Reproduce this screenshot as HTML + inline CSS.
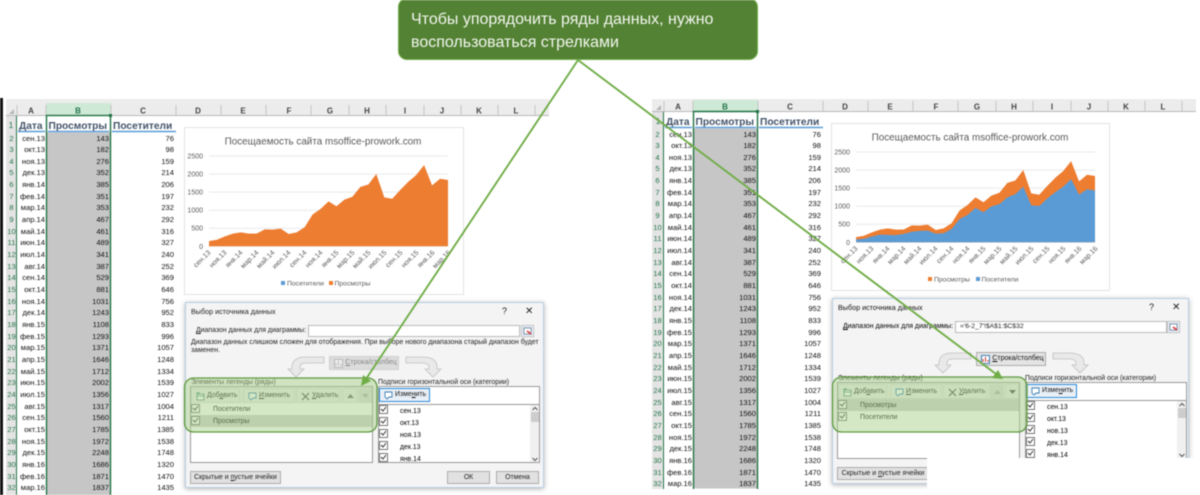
<!DOCTYPE html>
<html lang="ru"><head><meta charset="utf-8"><title>Excel</title>
<style>
html,body{margin:0;padding:0;background:#fff;width:1200px;height:495px;overflow:hidden}
body{font-family:"Liberation Sans","Noto Sans CJK SC",sans-serif;position:relative}
#all{position:absolute;left:0;top:0;width:1200px;height:495px;filter:blur(.45px);overflow:hidden}
.abs,svg.pg{position:absolute}
svg.pg{left:0;top:0}
.col{position:absolute;font-size:7.6px;line-height:11.65px;color:#111;text-align:right;white-space:nowrap}
.num{text-align:center;color:#217346;width:11px}
.dlg{position:absolute;width:359px;height:186px;background:#f4f4f4;border:1px solid #b9cfe4;box-sizing:border-box;box-shadow:0 1px 5px rgba(0,0,0,.3);font-size:6.9px;color:#222}
.dlg>*{position:absolute;white-space:nowrap}
.t{line-height:8px}
.box{background:#fff;border:1px solid #999;box-sizing:border-box}
.btn{background:#e1e1e1;border:1px solid #adadad;box-sizing:border-box;text-align:center;line-height:11px;color:#222}
.tb{background:#ececec;border:1px solid #dcdcdc;box-sizing:border-box;line-height:13px;text-align:left;padding-left:15px;color:#111}
.ic{position:absolute;left:4px;top:3px}
.c{fill:#fff;stroke:#555;stroke-width:.8}
.sc{background:#f0f0f0}
.d{color:#000}
</style></head><body>
<div id="all">
<div class="abs" style="left:0;top:98px;width:3px;height:397px;background:#111"></div>

<svg class="pg" width="1200" height="495" viewBox="0 0 1200 495" font-family="Liberation Sans, sans-serif">
<!-- left sheet -->
<rect x="6" y="99" width="543" height="16" fill="#ececec"/>
<rect x="6" y="115" width="543" height="1" fill="#b8b8b8"/>
<rect x="46" y="103" width="65" height="12" fill="#cfe9d7"/>
<rect x="6" y="116" width="10" height="379" fill="#e4e4e4"/>
<rect x="16" y="116" width="1" height="379" fill="#217346"/>
<path d="M9 114h5v-5z" fill="#b5b5b5"/>
<path d="M17 105v10M46 105v10M111 105v10M176 105v10M221 105v10M266 105v10M311 105v10M349 105v10M386 105v10M424 105v10M461 105v10M498 105v10M535 105v10" stroke="#c4c4c4" fill="none"/>
<g font-size="8" text-anchor="middle" fill="#444" font-weight="bold">
<text x="31" y="113.500">A</text><text x="78" y="113.500" fill="#217346">B</text><text x="143" y="113.500">C</text><text x="198" y="113.500">D</text><text x="243" y="113.500">E</text><text x="289" y="113.500">F</text><text x="330" y="113.500">G</text><text x="367" y="113.500">H</text><text x="405" y="113.500">I</text><text x="442" y="113.500">J</text><text x="479" y="113.500">K</text><text x="516" y="113.500">L</text>
</g>
<text x="11" y="128" font-size="8" text-anchor="middle" fill="#217346">1</text>
<g font-size="10.200" font-weight="bold" fill="#44546a"><text x="19" y="129">Дата</text><text x="48.500" y="129">Просмотры</text><text x="113" y="129">Посетители</text></g>
<path d="M18 131.500h27M48 131.500h61M112 131.500h64" stroke="#5b9bd5" stroke-width="1.500"/>
<rect x="47" y="132.500" width="63" height="363" fill="#c6c6c6"/>
<rect x="46.500" y="115.500" width="64" height="390" fill="none" stroke="#217346" stroke-width="1.400"/>
<rect x="109" y="114" width="3" height="3" fill="#217346"/>

<!-- right sheet -->
<rect x="652" y="99" width="544" height="12" fill="#ececec"/>
<rect x="652" y="111" width="544" height="1" fill="#b8b8b8"/>
<rect x="693" y="100" width="65" height="11" fill="#cfe9d7"/>
<rect x="652" y="112" width="11" height="377" fill="#e4e4e4"/>
<rect x="663" y="112" width="1" height="377" fill="#217346"/>
<path d="M656 110h5v-5z" fill="#b5b5b5"/>
<path d="M664 101v10M693 101v10M758 101v10M823 101v10M868 101v10M913 101v10M958 101v10M996 101v10M1033 101v10M1071 101v10M1108 101v10M1145 101v10M1182 101v10" stroke="#c4c4c4" fill="none"/>
<g font-size="8" text-anchor="middle" fill="#444" font-weight="bold">
<text x="678" y="109.500">A</text><text x="725" y="109.500" fill="#217346">B</text><text x="790" y="109.500">C</text><text x="845" y="109.500">D</text><text x="890" y="109.500">E</text><text x="936" y="109.500">F</text><text x="977" y="109.500">G</text><text x="1014" y="109.500">H</text><text x="1052" y="109.500">I</text><text x="1089" y="109.500">J</text><text x="1126" y="109.500">K</text><text x="1163" y="109.500">L</text>
</g>
<text x="658" y="124" font-size="8" text-anchor="middle" fill="#217346">1</text>
<g font-size="10.200" font-weight="bold" fill="#44546a"><text x="666" y="125">Дата</text><text x="695.500" y="125">Просмотры</text><text x="760" y="125">Посетители</text></g>
<path d="M665 127.500h27M695 127.500h61M759 127.500h64" stroke="#5b9bd5" stroke-width="1.500"/>
<rect x="694" y="128.500" width="63" height="360" fill="#c6c6c6"/>
<path d="M693.500 489V111.500H757.500V489" fill="none" stroke="#217346" stroke-width="1.400"/>
<rect x="756" y="110" width="3" height="3" fill="#217346"/>

<!-- left chart -->
<rect x="184.500" y="127.500" width="279" height="167" fill="#fff" stroke="#e2e2e2"/>
<text x="323" y="144.500" font-size="9.900" text-anchor="middle" fill="#595959">Посещаемость сайта msoffice-prowork.com</text>
<path d="M209 156h239M209 174.100h239M209 192.100h239M209 210.200h239M209 228.200h239M209 246.300h239" stroke="#e9e9e9" stroke-width="1"/>
<g font-size="7" fill="#595959" text-anchor="end"><text x="203" y="158.500">2500</text><text x="203" y="176.500">2000</text><text x="203" y="194.500">1500</text><text x="203" y="212.500">1000</text><text x="203" y="230.500">500</text><text x="203" y="248.800">0</text></g>
<g transform="translate(209,246.300) scale(7.967,-0.03612)"><path fill="#ed7d31" d="M0 0L0 143 1 182 2 276 3 352 4 385 5 351 6 353 7 467 8 461 9 489 10 341 11 387 12 529 13 881 14 1031 15 1243 16 1108 17 1293 18 1371 19 1646 20 1712 21 2002 22 1356 23 1317 24 1560 25 1785 26 1972 27 2248 28 1686 29 1871 30 1837 30 0Z"/></g>
<g font-size="7" fill="#595959" text-anchor="end">
<text transform="translate(211,253) rotate(-45)">сен.13</text><text transform="translate(227,253) rotate(-45)">ноя.13</text><text transform="translate(243,253) rotate(-45)">янв.14</text><text transform="translate(259,253) rotate(-45)">мар.14</text><text transform="translate(275,253) rotate(-45)">май.14</text><text transform="translate(291,253) rotate(-45)">июл.14</text><text transform="translate(307,253) rotate(-45)">сен.14</text><text transform="translate(323,253) rotate(-45)">ноя.14</text><text transform="translate(339,253) rotate(-45)">янв.15</text><text transform="translate(355,253) rotate(-45)">мар.15</text><text transform="translate(371,253) rotate(-45)">май.15</text><text transform="translate(387,253) rotate(-45)">июл.15</text><text transform="translate(403,253) rotate(-45)">сен.15</text><text transform="translate(419,253) rotate(-45)">ноя.15</text><text transform="translate(435,253) rotate(-45)">янв.16</text><text transform="translate(451,253) rotate(-45)">мар.16</text>
</g>
<rect x="281" y="281" width="4" height="4" fill="#5b9bd5"/><text x="287" y="285.500" font-size="6.800" fill="#595959">Посетители</text>
<rect x="329" y="281" width="4" height="4" fill="#ed7d31"/><text x="334.500" y="285.500" font-size="6.800" fill="#595959">Просмотры</text>

<!-- right chart -->
<rect x="831.500" y="123.500" width="278" height="167" fill="#fff" stroke="#e2e2e2"/>
<text x="970" y="140.500" font-size="9.900" text-anchor="middle" fill="#595959">Посещаемость сайта msoffice-prowork.com</text>
<path d="M856 152h239M856 170.100h239M856 188.100h239M856 206.200h239M856 224.200h239M856 242.300h239" stroke="#e9e9e9" stroke-width="1"/>
<g font-size="7" fill="#595959" text-anchor="end"><text x="850" y="154.500">2500</text><text x="850" y="172.500">2000</text><text x="850" y="190.500">1500</text><text x="850" y="208.500">1000</text><text x="850" y="226.500">500</text><text x="850" y="244.800">0</text></g>
<g transform="translate(856,242.300) scale(7.967,-0.03612)"><path fill="#ed7d31" d="M0 0L0 143 1 182 2 276 3 352 4 385 5 351 6 353 7 467 8 461 9 489 10 341 11 387 12 529 13 881 14 1031 15 1243 16 1108 17 1293 18 1371 19 1646 20 1712 21 2002 22 1356 23 1317 24 1560 25 1785 26 1972 27 2248 28 1686 29 1871 30 1837 30 0Z"/><path fill="#5b9bd5" d="M0 0L0 76 1 98 2 159 3 214 4 206 5 197 6 232 7 292 8 316 9 327 10 240 11 252 12 369 13 646 14 756 15 952 16 833 17 996 18 1057 19 1248 20 1334 21 1539 22 1027 23 1004 24 1211 25 1385 26 1538 27 1748 28 1320 29 1470 30 1435 30 0Z"/></g>
<g font-size="7" fill="#595959" text-anchor="end">
<text transform="translate(858,249) rotate(-45)">сен.13</text><text transform="translate(874,249) rotate(-45)">ноя.13</text><text transform="translate(890,249) rotate(-45)">янв.14</text><text transform="translate(906,249) rotate(-45)">мар.14</text><text transform="translate(922,249) rotate(-45)">май.14</text><text transform="translate(938,249) rotate(-45)">июл.14</text><text transform="translate(954,249) rotate(-45)">сен.14</text><text transform="translate(970,249) rotate(-45)">ноя.14</text><text transform="translate(986,249) rotate(-45)">янв.15</text><text transform="translate(1002,249) rotate(-45)">мар.15</text><text transform="translate(1018,249) rotate(-45)">май.15</text><text transform="translate(1034,249) rotate(-45)">июл.15</text><text transform="translate(1050,249) rotate(-45)">сен.15</text><text transform="translate(1066,249) rotate(-45)">ноя.15</text><text transform="translate(1082,249) rotate(-45)">янв.16</text><text transform="translate(1098,249) rotate(-45)">мар.16</text>
</g>
<rect x="928" y="277" width="4" height="4" fill="#ed7d31"/><text x="934" y="281.500" font-size="6.800" fill="#595959">Просмотры</text>
<rect x="976" y="277" width="4" height="4" fill="#5b9bd5"/><text x="981.500" y="281.500" font-size="6.800" fill="#595959">Посетители</text>
</svg>

<!-- left columns -->
<div class="col num" style="left:6px;top:132.500px">2<br>3<br>4<br>5<br>6<br>7<br>8<br>9<br>10<br>11<br>12<br>13<br>14<br>15<br>16<br>17<br>18<br>19<br>20<br>21<br>22<br>23<br>24<br>25<br>26<br>27<br>28<br>29<br>30<br>31<br>32</div>
<div class="col" style="right:1155px;top:132.500px">сен.13<br>окт.13<br>ноя.13<br>дек.13<br>янв.14<br>фев.14<br>мар.14<br>апр.14<br>май.14<br>июн.14<br>июл.14<br>авг.14<br>сен.14<br>окт.14<br>ноя.14<br>дек.14<br>янв.15<br>фев.15<br>мар.15<br>апр.15<br>май.15<br>июн.15<br>июл.15<br>авг.15<br>сен.15<br>окт.15<br>ноя.15<br>дек.15<br>янв.16<br>фев.16<br>мар.16</div>
<div class="col" style="right:1091px;top:132.500px">143<br>182<br>276<br>352<br>385<br>351<br>353<br>467<br>461<br>489<br>341<br>387<br>529<br>881<br>1031<br>1243<br>1108<br>1293<br>1371<br>1646<br>1712<br>2002<br>1356<br>1317<br>1560<br>1785<br>1972<br>2248<br>1686<br>1871<br>1837</div>
<div class="col" style="right:1026px;top:132.500px">76<br>98<br>159<br>214<br>206<br>197<br>232<br>292<br>316<br>327<br>240<br>252<br>369<br>646<br>756<br>952<br>833<br>996<br>1057<br>1248<br>1334<br>1539<br>1027<br>1004<br>1211<br>1385<br>1538<br>1748<br>1320<br>1470<br>1435</div>

<!-- right columns -->
<div class="col num" style="left:652px;top:128.500px">2<br>3<br>4<br>5<br>6<br>7<br>8<br>9<br>10<br>11<br>12<br>13<br>14<br>15<br>16<br>17<br>18<br>19<br>20<br>21<br>22<br>23<br>24<br>25<br>26<br>27<br>28<br>29<br>30<br>31<br>32</div>
<div class="col" style="right:508px;top:128.500px">сен.13<br>окт.13<br>ноя.13<br>дек.13<br>янв.14<br>фев.14<br>мар.14<br>апр.14<br>май.14<br>июн.14<br>июл.14<br>авг.14<br>сен.14<br>окт.14<br>ноя.14<br>дек.14<br>янв.15<br>фев.15<br>мар.15<br>апр.15<br>май.15<br>июн.15<br>июл.15<br>авг.15<br>сен.15<br>окт.15<br>ноя.15<br>дек.15<br>янв.16<br>фев.16<br>мар.16</div>
<div class="col" style="right:444px;top:128.500px">143<br>182<br>276<br>352<br>385<br>351<br>353<br>467<br>461<br>489<br>341<br>387<br>529<br>881<br>1031<br>1243<br>1108<br>1293<br>1371<br>1646<br>1712<br>2002<br>1356<br>1317<br>1560<br>1785<br>1972<br>2248<br>1686<br>1871<br>1837</div>
<div class="col" style="right:379px;top:128.500px">76<br>98<br>159<br>214<br>206<br>197<br>232<br>292<br>316<br>327<br>240<br>252<br>369<br>646<br>756<br>952<br>833<br>996<br>1057<br>1248<br>1334<br>1539<br>1027<br>1004<br>1211<br>1385<br>1538<br>1748<br>1320<br>1470<br>1435</div>

<!-- left dialog -->
<div class="dlg" style="left:185px;top:302px">
<div class="t" style="left:5px;top:5px;font-size:7.200px">Выбор источника данных</div>
<div class="t" style="left:316px;top:4px;font-size:9px">?</div>
<div class="t" style="left:339px;top:5px;font-size:10px">✕</div>
<div class="t" style="left:10px;top:24px"><u>Д</u>иапазон данных для диаграммы:</div>
<div class="box" style="left:122px;top:22px;width:212px;height:12px;border-color:#bbb"></div>
<svg style="left:335px;top:22px" width="13" height="12"><rect width="13" height="12" fill="#dfe6ee" stroke="#aaa"/><rect x="3" y="3" width="7" height="6" fill="#fff" stroke="#6a7f98" stroke-width=".8"/><path d="M6 6l4 3" stroke="#d33" stroke-width="1.500"/></svg>
<div class="t" style="left:5px;top:36px;line-height:8px">Диапазон данных слишком сложен для отображения. При выборе нового диапазона старый диапазон будет<br>заменен.</div>
<svg style="left:0;top:0" width="359" height="186"><path d="M138 54H120Q106 54 106 64V66H102L110 74L118 66H114V64Q114 60 120 60H138Z" fill="#e9e9e9" stroke="#c0c0c0" stroke-width=".8"/><path d="M220 54H236Q251 54 251 64V66H255L247 74L239 66H243V64Q243 60 236 60H220Z" fill="#e9e9e9" stroke="#c0c0c0" stroke-width=".8"/></svg>
<div class="btn" style="left:143px;top:53px;width:70px;height:14px;line-height:12px;color:#888;background:#dcdcdc;border-color:#d0d0d0;padding-left:14px;font-size:7px"><svg class="ic" style="top:2px" width="9" height="9"><rect x=".5" y=".5" width="8" height="8" fill="#eee" stroke="#bbb"/><path d="M2 7V4M4.500 7V2M7 7V5" stroke="#bbb"/></svg><u>С</u>трока/столбец</div>
<div class="t" style="left:5px;top:76px" >Элементы легенды (ряды)</div>
<div class="t" style="left:192px;top:76px">Подписи горизонтальной оси (категории)</div>
<div class="box" style="left:4px;top:83px;width:183px;height:77px"></div>
<div class="abs" style="left:5px;top:84px;width:181px;height:16px;background:#ececec"></div>
<div class="tb" style="left:5px;top:85px;width:49px;height:15px"><svg class="ic" width="9" height="9"><path d="M1 2h7v6H1zM1 4h7M3 2V0M0 1h3" fill="#fff" stroke="#3f7f5f" stroke-width=".8"/></svg>Доб<u>а</u>вить</div>
<div class="tb" style="left:57px;top:85px;width:52px;height:15px"><svg class="ic" width="9" height="9"><path d="M1 1h7v5H5L3 8 1 6z" fill="#fff" stroke="#3c7fb5" stroke-width=".9"/></svg><u>И</u>зменить</div>
<div class="tb" style="left:110px;top:85px;width:44px;height:15px"><svg class="ic" width="9" height="9"><path d="M1 1l7 7M8 1L1 8" stroke="#444" stroke-width="1.100"/></svg><u>У</u>далить</div>
<div class="tb" style="left:156px;top:85px;width:15px;height:15px;padding:0"><svg class="ic" width="7" height="7"><path d="M0 6L3.500 2 7 6z" fill="#666"/></svg></div>
<div class="tb" style="left:172px;top:85px;width:14px;height:15px;padding:0;background:#dcdcdc"><svg class="ic" style="left:3px" width="7" height="7"><path d="M0 2L3.500 6 7 2z" fill="#aaa"/></svg></div>
<div class="abs" style="left:5px;top:112px;width:181px;height:12px;background:#cfcfcf"></div>
<svg style="left:5px;top:101px" width="10" height="22"><g class="c"><rect x=".5" y=".5" width="8" height="8"/><rect x=".5" y="12.500" width="8" height="8"/></g><path d="M2 4l2 2 3-4M2 16l2 2 3-4" fill="none" stroke="#333"/></svg>
<div class="t d" style="left:27px;top:103px">Посетители</div>
<div class="t d" style="left:27px;top:115px">Просмотры</div>
<div class="box" style="left:192px;top:83px;width:162px;height:77px"></div>
<div class="abs" style="left:193px;top:84px;width:160px;height:18px;background:#fff;border-bottom:1px solid #999;box-sizing:border-box"></div>
<div class="tb" style="left:193px;top:85px;width:51px;height:14px;border:1px solid #2b88d8;background:#e8eff6;line-height:12px"><svg class="ic" style="top:2px" width="9" height="9"><path d="M1 1h7v5H5L3 8 1 6z" fill="#fff" stroke="#3c7fb5" stroke-width=".9"/></svg>Изме<u>н</u>ить</div>
<svg style="left:193px;top:102px" width="10" height="58"><g class="c"><rect x=".5" y=".5" width="8" height="8"/><rect x=".5" y="12.500" width="8" height="8"/><rect x=".5" y="24.500" width="8" height="8"/><rect x=".5" y="36.500" width="8" height="8"/><rect x=".5" y="48.500" width="8" height="8"/></g><path d="M2 4l2 2 3-4M2 16l2 2 3-4M2 28l2 2 3-4M2 40l2 2 3-4M2 52l2 2 3-4" fill="none" stroke="#333"/></svg>
<div class="t d" style="left:214px;top:103px;line-height:12.100px">сен.13<br>окт.13<br>ноя.13<br>дек.13<br>янв.14</div>
<div class="sc" style="left:344px;top:102px;width:9px;height:57px"></div>
<div class="abs" style="left:345px;top:109px;width:8px;height:10px;background:#cdcdcd"></div>
<svg style="left:345px;top:103px" width="8" height="56"><path d="M1.500 4L4 1.500 6.500 4M1.500 52L4 54.500 6.500 52" fill="none" stroke="#555"/></svg>
<div class="btn" style="left:4px;top:168px;width:91px;height:13px">Скрытые и <u>п</u>устые ячейки</div>
<div class="btn" style="left:261px;top:168px;width:43px;height:13px">ОК</div>
<div class="btn" style="left:310px;top:168px;width:43px;height:13px">Отмена</div>
</div>

<!-- right dialog -->
<div class="dlg" style="left:832px;top:298px;width:357px;height:186px">
<div class="t" style="left:5px;top:5px;font-size:7.200px;color:#111">Выбор источника данных</div>
<div class="t" style="left:316px;top:4px;font-size:9px">?</div>
<div class="t" style="left:339px;top:5px;font-size:10px">✕</div>
<div class="t d" style="left:10px;top:24px"><u>Д</u>иапазон данных для диаграммы:</div>
<div class="box" style="left:122px;top:22px;width:212px;height:12px;border-color:#bbb;padding-left:4px;line-height:10px;font-size:6.800px">='6-2_7'!$A$1:$C$32</div>
<svg style="left:334px;top:22px" width="13" height="12"><rect width="13" height="12" fill="#dfe6ee" stroke="#aaa"/><rect x="3" y="3" width="7" height="6" fill="#fff" stroke="#6a7f98" stroke-width=".8"/><path d="M6 6l4 3" stroke="#d33" stroke-width="1.500"/></svg>
<svg style="left:0;top:0" width="359" height="186"><path d="M138 54H120Q106 54 106 64V66H102L110 74L118 66H114V64Q114 60 120 60H138Z" fill="#e9e9e9" stroke="#c0c0c0" stroke-width=".8"/><path d="M220 54H236Q251 54 251 64V66H255L247 74L239 66H243V64Q243 60 236 60H220Z" fill="#e9e9e9" stroke="#c0c0c0" stroke-width=".8"/></svg>
<div class="btn" style="left:143px;top:53px;width:70px;height:14px;line-height:12px;background:#e4e4e4;padding-left:14px;font-size:7px;color:#111"><svg class="ic" style="top:2px" width="9" height="9"><rect x=".5" y=".5" width="8" height="8" fill="#fff" stroke="#3c7fb5"/><path d="M2 7V4M4.500 7V2M7 7V5" stroke="#c33"/></svg><u>С</u>трока/столбец</div>
<div class="t" style="left:5px;top:76px">Элементы легенды (ряды)</div>
<div class="t" style="left:192px;top:76px">Подписи горизонтальной оси (категории)</div>
<div class="box" style="left:4px;top:83px;width:183px;height:77px"></div>
<div class="abs" style="left:5px;top:84px;width:181px;height:16px;background:#ececec"></div>
<div class="tb" style="left:5px;top:85px;width:49px;height:15px"><svg class="ic" width="9" height="9"><path d="M1 2h7v6H1zM1 4h7M3 2V0M0 1h3" fill="#fff" stroke="#3f7f5f" stroke-width=".8"/></svg>Доб<u>а</u>вить</div>
<div class="tb" style="left:57px;top:85px;width:52px;height:15px"><svg class="ic" width="9" height="9"><path d="M1 1h7v5H5L3 8 1 6z" fill="#fff" stroke="#3c7fb5" stroke-width=".9"/></svg><u>И</u>зменить</div>
<div class="tb" style="left:110px;top:85px;width:44px;height:15px"><svg class="ic" width="9" height="9"><path d="M1 1l7 7M8 1L1 8" stroke="#444" stroke-width="1.100"/></svg><u>У</u>далить</div>
<div class="tb" style="left:156px;top:85px;width:15px;height:15px;padding:0;background:#dcdcdc"><svg class="ic" width="7" height="7"><path d="M0 6L3.500 2 7 6z" fill="#aaa"/></svg></div>
<div class="tb" style="left:172px;top:85px;width:14px;height:15px;padding:0"><svg class="ic" style="left:3px" width="7" height="7"><path d="M0 2L3.500 6 7 2z" fill="#444"/></svg></div>
<div class="abs" style="left:5px;top:100px;width:181px;height:12px;background:#cfcfcf"></div>
<svg style="left:5px;top:101px" width="10" height="22"><g class="c"><rect x=".5" y=".5" width="8" height="8"/><rect x=".5" y="12.500" width="8" height="8"/></g><path d="M2 4l2 2 3-4M2 16l2 2 3-4" fill="none" stroke="#333"/></svg>
<div class="t d" style="left:27px;top:103px">Просмотры</div>
<div class="t d" style="left:27px;top:115px">Посетители</div>
<div class="box" style="left:192px;top:83px;width:162px;height:77px"></div>
<div class="abs" style="left:193px;top:84px;width:160px;height:18px;background:#fff;border-bottom:1px solid #999;box-sizing:border-box"></div>
<div class="tb" style="left:193px;top:85px;width:51px;height:14px;border:1px solid #2b88d8;background:#e8eff6;line-height:12px"><svg class="ic" style="top:2px" width="9" height="9"><path d="M1 1h7v5H5L3 8 1 6z" fill="#fff" stroke="#3c7fb5" stroke-width=".9"/></svg>Изме<u>н</u>ить</div>
<svg style="left:193px;top:102px" width="10" height="58"><g class="c"><rect x=".5" y=".5" width="8" height="8"/><rect x=".5" y="12.500" width="8" height="8"/><rect x=".5" y="24.500" width="8" height="8"/><rect x=".5" y="36.500" width="8" height="8"/><rect x=".5" y="48.500" width="8" height="8"/></g><path d="M2 4l2 2 3-4M2 16l2 2 3-4M2 28l2 2 3-4M2 40l2 2 3-4M2 52l2 2 3-4" fill="none" stroke="#333"/></svg>
<div class="t d" style="left:214px;top:103px;line-height:12.100px">сен.13<br>окт.13<br>нов.13<br>дек.13<br>янв.14</div>
<div class="sc" style="left:344px;top:102px;width:9px;height:57px"></div>
<div class="abs" style="left:345px;top:109px;width:8px;height:10px;background:#cdcdcd"></div>
<svg style="left:345px;top:103px" width="8" height="56"><path d="M1.500 4L4 1.500 6.500 4M1.500 52L4 54.500 6.500 52" fill="none" stroke="#555"/></svg>
<div class="btn" style="left:4px;top:168px;width:91px;height:13px;border-right:0">Скрытые и <u>п</u>устые ячейки</div>
</div>
<div class="abs" style="left:927px;top:458px;width:273px;height:37px;background:#fff"></div>

<!-- callout, highlights and connector lines -->
<svg class="pg" width="1200" height="495" viewBox="0 0 1200 495">
<rect x="184.500" y="378" width="192.500" height="54" rx="9" fill="#a9d18e" fill-opacity=".5" stroke="#5f9a42" stroke-width="1.300"/>
<rect x="832.500" y="377" width="194.500" height="55" rx="9" fill="#a9d18e" fill-opacity=".5" stroke="#5f9a42" stroke-width="1.300"/>
<path d="M578 60L366 379M578 60L996 374" fill="none" stroke="#70ad47" stroke-width="1.900"/>
<path d="M361 386L363 375 371 381zM1003 379L992 378 998 370z" fill="#70ad47"/>
</svg>
<div class="abs" style="left:398px;top:-2px;width:360px;height:62px;box-sizing:border-box;background:#548235;border:1px solid #70ad47;border-radius:9px;color:#f2f6ee;font-size:16px;line-height:23px;padding:9px 0 0 12px;white-space:nowrap">Чтобы упорядочить ряды данных, нужно<br>воспользоваться стрелками</div>
</div>
</body></html>
